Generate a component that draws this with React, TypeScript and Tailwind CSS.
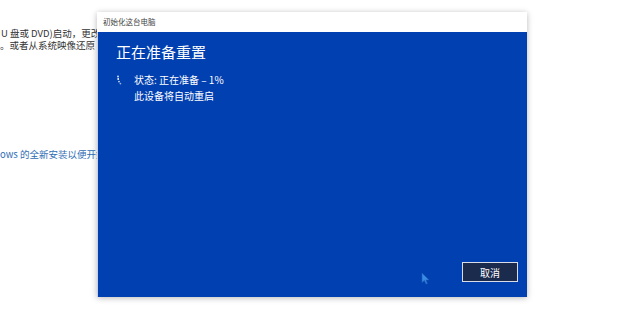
import React from 'react';

const cjk = { fontFamily: '"Noto Sans CJK SC", "Noto Sans", sans-serif' };

function Spinner() {
  return (
    <svg width="6" height="10" viewBox="0 0 6 10" className="mt-[1px]">
      <circle cx="2" cy="1.5" r="0.9" fill="#dfe8ff" />
      <circle cx="2.2" cy="4" r="0.9" fill="#ffffff" />
      <circle cx="3" cy="6.6" r="0.9" fill="#ffffff" opacity="0.8" />
      <circle cx="4.4" cy="8.6" r="0.9" fill="#ffffff" opacity="0.6" />
    </svg>
  );
}

function Cursor() {
  return (
    <svg width="9" height="13" viewBox="0 0 9 13" className="absolute left-[323px] top-[240px]">
      <path d="M1 1 L1 10.5 L3.4 8.4 L5 12 L6.4 11.4 L4.9 7.9 L8 7.9 Z" fill="#3a8be6" stroke="#1c5fb8" strokeWidth="0.6" strokeLinejoin="round" />
    </svg>
  );
}

export default function App() {
  return (
    <div className="relative h-[309px] w-[620px] overflow-hidden bg-white" style={cjk}>
      {/* background settings page text, the rest is under the dialog */}
      <div className="flex w-[97px] flex-col overflow-hidden pt-[27px] text-[9.5px] leading-[12px] text-[#333]">
        <div className="whitespace-nowrap pl-[1px]">U 盘或 DVD)启动，更改你的电脑固件设置</div>
        <div className="whitespace-nowrap">。或者从系统映像还原 Windows</div>
        <div className="mt-[97px] whitespace-nowrap text-[#2f6db5]">ows 的全新安装以便开始使用</div>
      </div>

      {/* dialog */}
      <div className="absolute left-[97px] top-[12px] flex h-[285px] w-[430px] flex-col shadow-[0_1px_6px_rgba(0,0,0,0.28)]">
        <div className="flex h-[20px] items-center bg-white pl-[6px] text-[7.5px] text-[#444]">初始化这台电脑</div>
        <div className="relative flex flex-1 flex-col border-l border-[#c9d2e6] bg-[#0140b0] pl-[18px] pr-[9px] pb-[15px]">
          <div className="mt-[10px] text-[15px] leading-[20px] text-white">正在准备重置</div>
          <div className="mt-[12px] flex gap-[12px]">
            <Spinner />
            <div className="flex flex-col gap-[4px] text-[10px] leading-[12px] text-white">
              <div>状态: 正在准备 – 1%</div>
              <div>此设备将自动重启</div>
            </div>
          </div>
          <div className="mt-auto flex justify-end">
            <button className="flex h-[20px] w-[56px] items-center justify-center border border-[#d8dde8] bg-[#1b2b4d] text-[10px] text-white">
              取消
            </button>
          </div>
          <Cursor />
        </div>
      </div>
    </div>
  );
}
